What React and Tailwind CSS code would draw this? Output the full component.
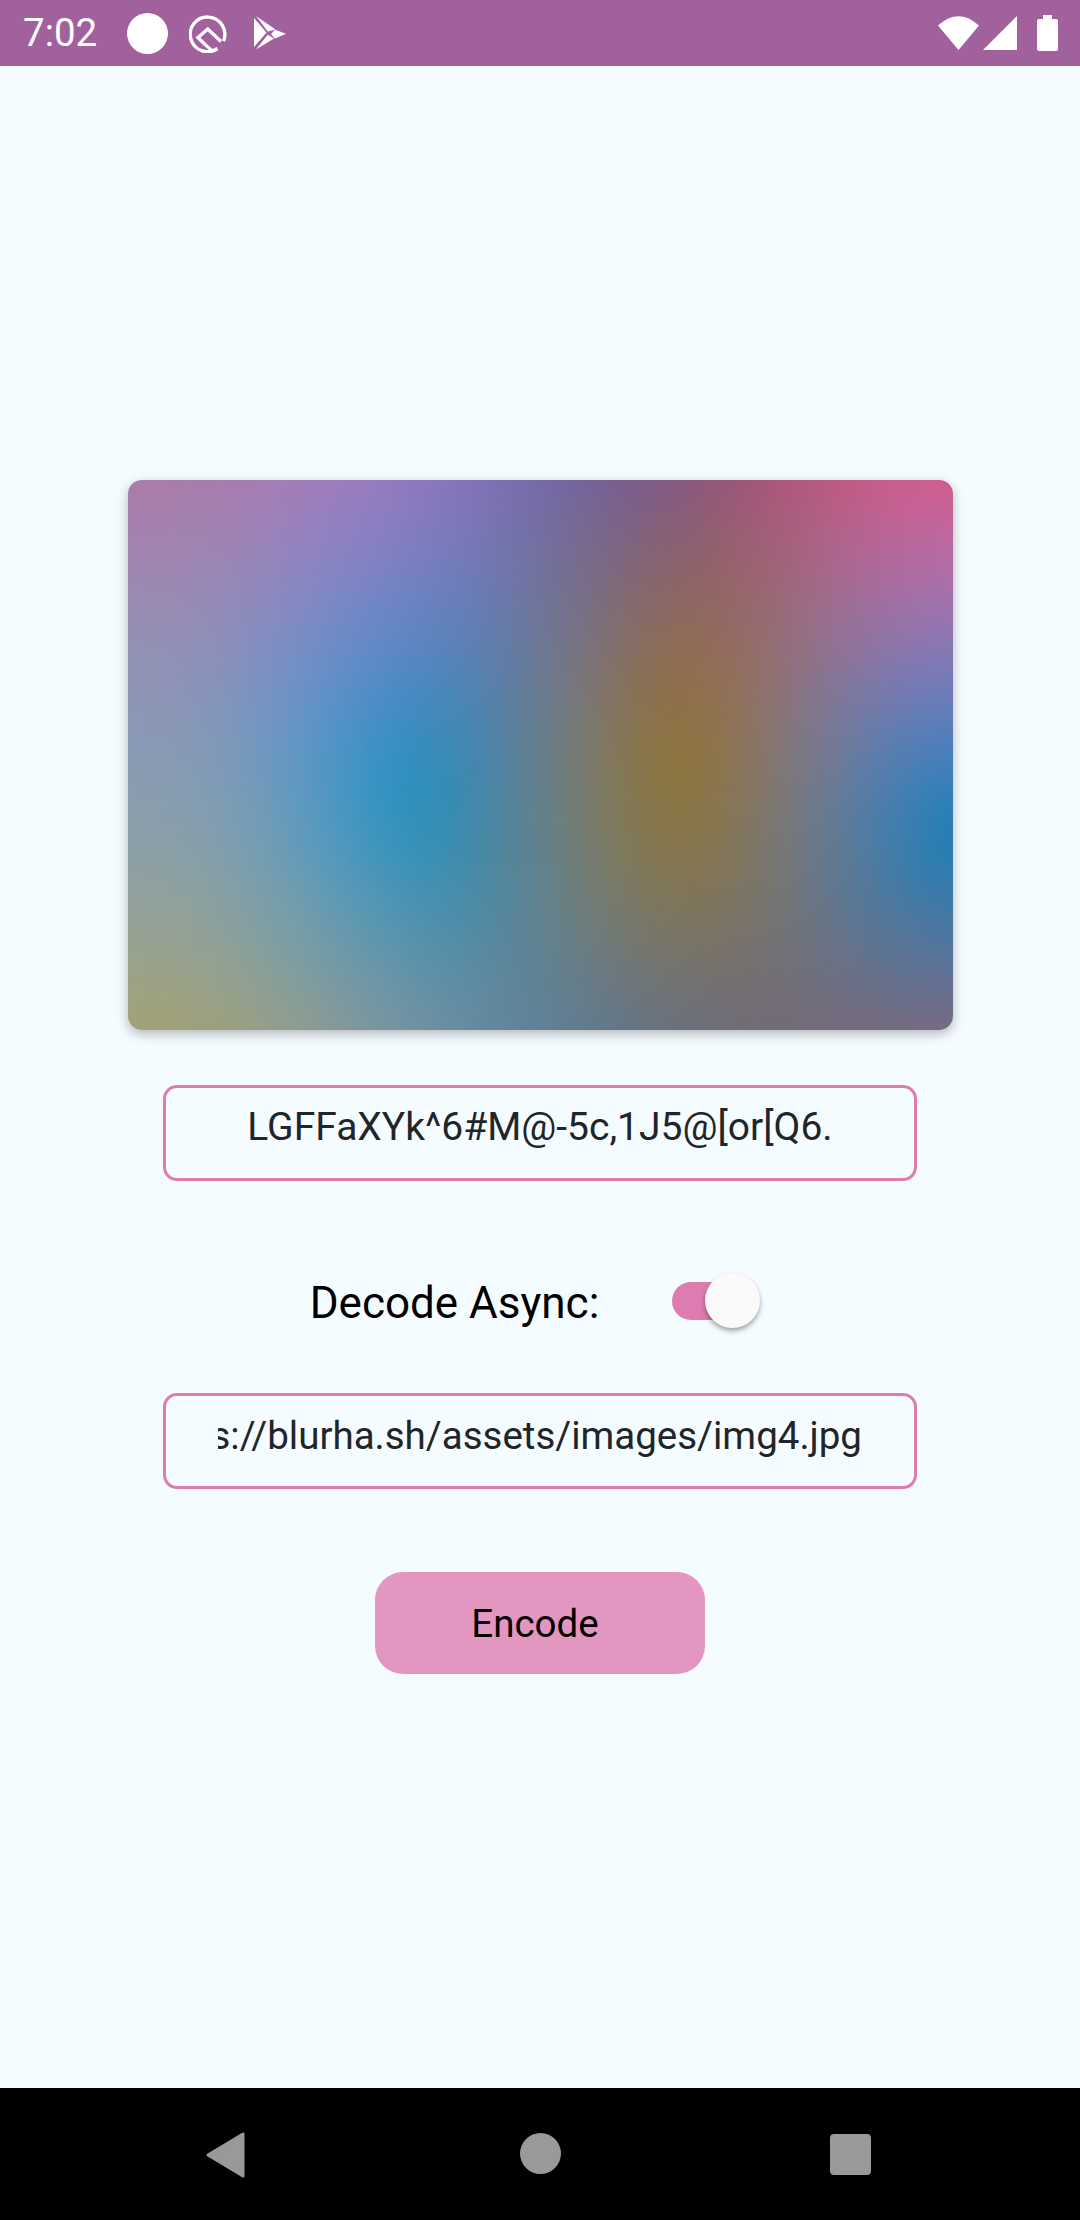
import React, { useEffect, useRef } from "react";

const CHARS = "0123456789ABCDEFGHIJKLMNOPQRSTUVWXYZabcdefghijklmnopqrstuvwxyz#$%*+,-.:;=?@[]^_{|}~";
const dec83 = (s) => { let v = 0; for (const c of s) v = v * 83 + CHARS.indexOf(c); return v; };
const s2l = (v) => { const x = v / 255; return x <= 0.04045 ? x / 12.92 : Math.pow((x + 0.055) / 1.055, 2.4); };
const l2s = (v) => { const x = Math.max(0, Math.min(1, v)); return Math.round((x <= 0.0031308 ? x * 12.92 : 1.055 * Math.pow(x, 1 / 2.4) - 0.055) * 255); };
const signPow = (v, e) => Math.sign(v) * Math.pow(Math.abs(v), e);

function decodeBlurhash(hash, w, h) {
  const size = dec83(hash[0]);
  const ny = Math.floor(size / 9) + 1;
  const nx = (size % 9) + 1;
  const maxAC = (dec83(hash[1]) + 1) / 166;
  const colors = [];
  for (let i = 0; i < nx * ny; i++) {
    if (i === 0) {
      const v = dec83(hash.substring(2, 6));
      colors.push([s2l(v >> 16), s2l((v >> 8) & 255), s2l(v & 255)]);
    } else {
      const v = dec83(hash.substring(4 + i * 2, 6 + i * 2));
      const r = Math.floor(v / 361), g = Math.floor(v / 19) % 19, b = v % 19;
      colors.push([r, g, b].map((q) => signPow((q - 9) / 9, 2) * maxAC));
    }
  }
  const px = new Uint8ClampedArray(w * h * 4);
  for (let y = 0; y < h; y++) for (let x = 0; x < w; x++) {
    let r = 0, g = 0, b = 0;
    for (let j = 0; j < ny; j++) for (let i = 0; i < nx; i++) {
      const basis = Math.cos((Math.PI * x * i) / w) * Math.cos((Math.PI * y * j) / h);
      const c = colors[i + j * nx];
      r += c[0] * basis; g += c[1] * basis; b += c[2] * basis;
    }
    const o = 4 * (x + y * w);
    px[o] = l2s(r); px[o + 1] = l2s(g); px[o + 2] = l2s(b); px[o + 3] = 255;
  }
  return px;
}

function Blurhash({ hash }) {
  const ref = useRef(null);
  useEffect(() => {
    const cv = ref.current;
    cv.getContext("2d").putImageData(new ImageData(decodeBlurhash(hash, 32, 32), 32, 32), 0, 0);
  }, [hash]);
  return <canvas ref={ref} width={32} height={32} className="block w-full h-full object-cover rounded-[14px]" />;
}

const QIcon = () => (
  <svg viewBox="0 0 38 40" className="w-[38px] h-[40px] ml-[21px]" fill="none" stroke="white" strokeWidth="3.4">
    <path d="M28.5 35.5 A17.3 17.3 0 1 1 34.5 28" />
    <path d="M32 28.5 L18.7 16 L9 24.5 L16 31.5" />
    <path d="M16 31.5 L24 38.5" strokeWidth="3" />
  </svg>
);

const PlayIcon = () => (
  <svg viewBox="0 0 32 34" className="w-[32px] h-[34px] ml-[27px]" fill="white">
    <path d="M0 2 L12.5 16.5 L0 31 Z" />
    <path d="M2 0 L21.5 13.5 L13.8 15.5 Z" />
    <path d="M21 13.7 L32 17.7 L21 22.5 L17 18 Z" />
    <path d="M2 33.5 L20 22.5 L13.7 18.7 Z" />
  </svg>
);

export default function App() {
  return (
    <div className="flex flex-col h-[2220px] w-[1080px] bg-[#f5fcff] font-['Roboto',sans-serif]">
      <div className="flex items-center justify-between h-[66px] bg-[#a0619d] text-white pl-[23px] pr-[22px]">
        <div className="flex items-center">
          <span className="text-[38.5px] leading-none">7:02</span>
          <span className="w-[41px] h-[41px] rounded-full bg-white ml-[30px]" />
          <QIcon />
          <PlayIcon />
        </div>
        <div className="flex items-center">
          <svg viewBox="0 0 41 34" className="w-[41px] h-[34px]" fill="white"><path d="M0 9.5 Q20.5 -9 41 9.5 L20.5 34 Z" /></svg>
          <svg viewBox="0 0 34 34" className="w-[34px] h-[34px] ml-[4px]" fill="white"><path d="M34 0 V34 H0 Z" /></svg>
          <div className="flex flex-col items-center ml-[20px]">
            <span className="w-[9px] h-[4px] bg-white" />
            <span className="w-[21px] h-[32px] bg-white rounded-[2px]" />
          </div>
        </div>
      </div>

      <main className="flex-1 flex flex-col items-center justify-center">
        <div className="w-[825px] h-[550px] rounded-[14px] shadow-[0_4px_12px_rgba(0,0,0,0.28)]">
          <Blurhash hash="LGFFaXYk^6#M@-5c,1J5@[or[Q6." />
        </div>
        <div className="mt-[55px] w-[754px] h-[96px] rounded-[14px] border-[3px] border-[#de7cb1] flex items-center justify-center pb-[10px] text-[39px] text-[#212529]">
          LGFFaXYk^6#M@-5c,1J5@[or[Q6.
        </div>
        <div className="mt-[92px] h-[55px] flex items-center pr-[10px]">
          <span className="text-[44px] leading-none text-black pt-[6px]">Decode Async:</span>
          <div className="relative ml-[73px] w-[88px] h-[55px]">
            <div className="absolute left-0 top-[9px] w-[70px] h-[38px] rounded-full bg-[#de7cb1]" />
            <div className="absolute left-[33px] top-0 w-[55px] h-[55px] rounded-full bg-[#fafafa] shadow-[0_3px_5px_rgba(0,0,0,0.35)]" />
          </div>
        </div>
        <div className="mt-[65px] w-[754px] h-[96px] rounded-[14px] border-[3px] border-[#de7cb1] flex items-center pb-[10px] px-[52px] text-[38.5px] text-[#212529]">
          <div className="w-full flex justify-end overflow-hidden whitespace-nowrap">
            <span className="shrink-0">https://blurha.sh/assets/images/img4.jpg</span>
          </div>
        </div>
        <button className="mt-[83px] mb-[1px] w-[330px] h-[102px] rounded-[28px] bg-[#e396c0] text-[38.5px] text-black flex items-center justify-center pr-[10px] pt-[2px]">
          Encode
        </button>
      </main>

      <div className="flex items-center h-[132px] bg-black">
        <div className="relative w-full h-full">
          <svg viewBox="0 0 39 46" className="absolute left-[206px] top-[44px] w-[39px] h-[46px]" fill="#999999" stroke="#999999" strokeWidth="3" strokeLinejoin="round"><path d="M37 2 V44 L2 23 Z" /></svg>
          <span className="absolute left-[520px] top-[45px] w-[41px] h-[41px] rounded-full bg-[#999999]" />
          <span className="absolute left-[830px] top-[46px] w-[41px] h-[41px] rounded-[4px] bg-[#999999]" />
        </div>
      </div>
    </div>
  );
}
